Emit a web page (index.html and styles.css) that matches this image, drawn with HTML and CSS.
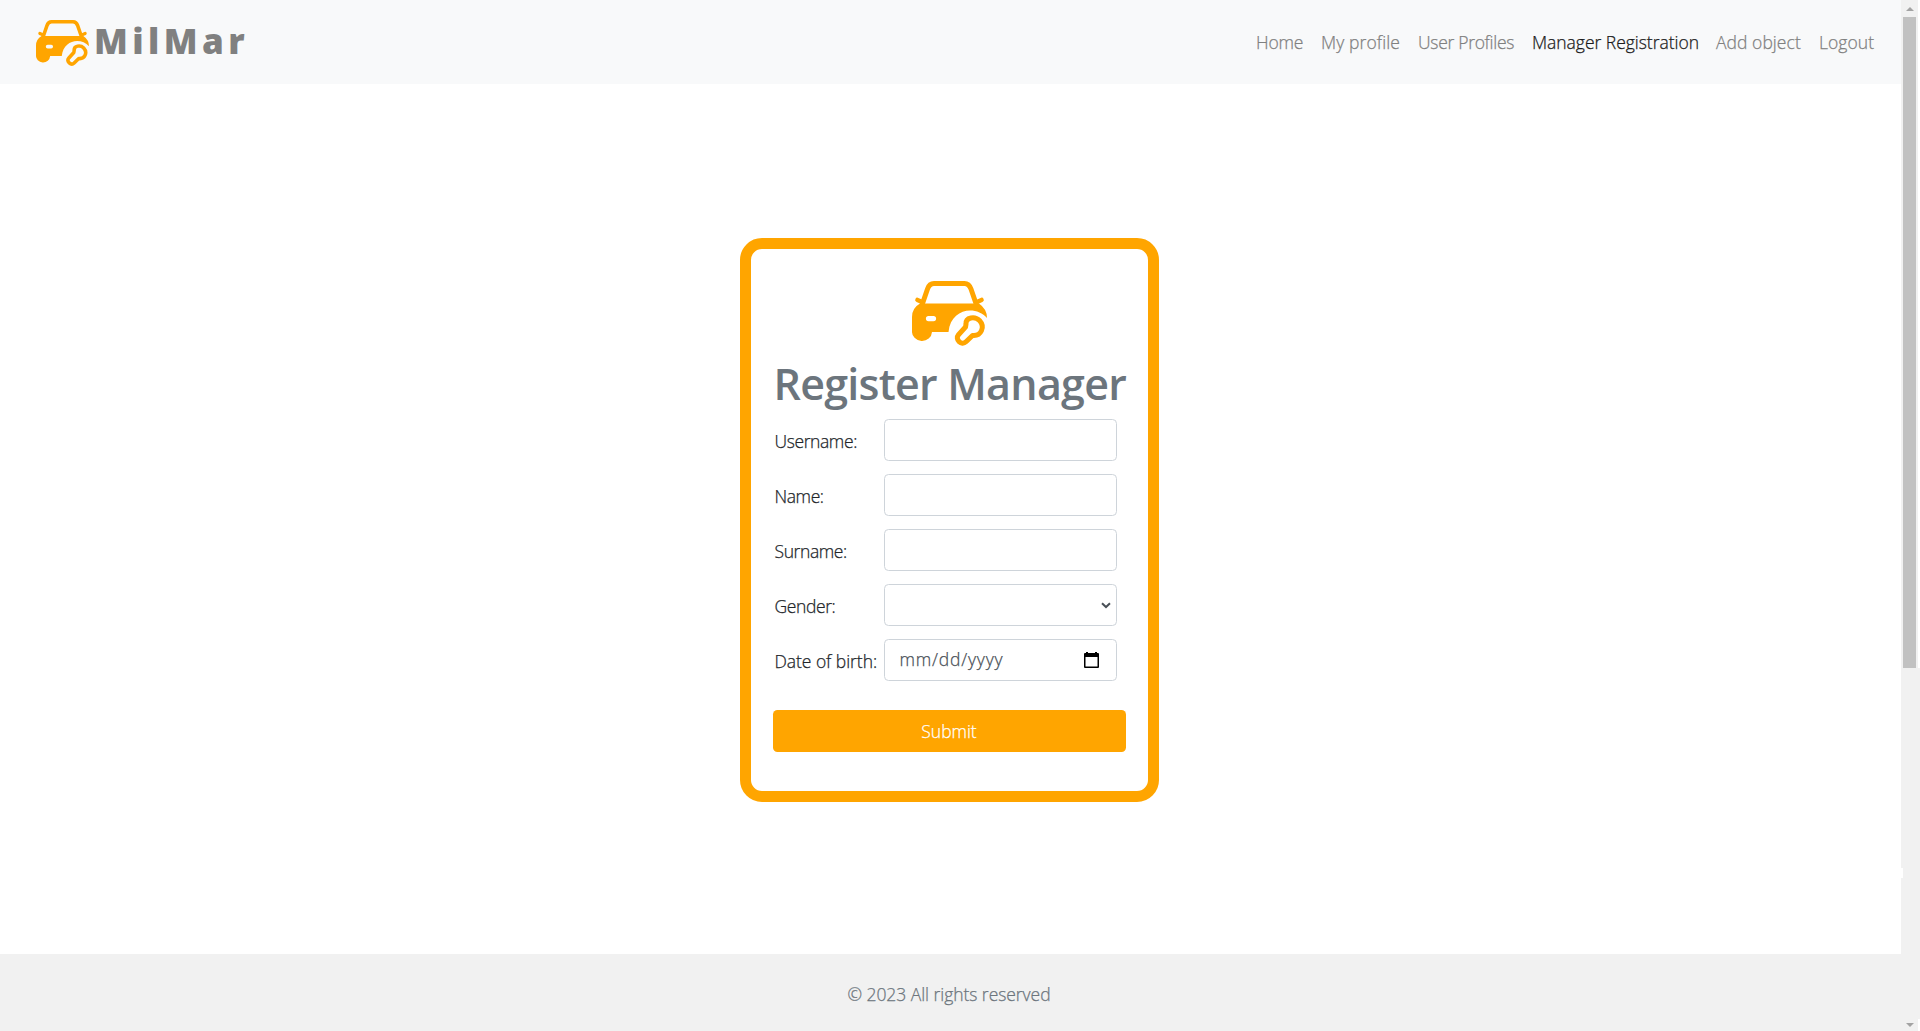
FILE: index.html
```html
<!DOCTYPE html>
<html lang="en">
<head>
<meta charset="utf-8">
<title>MilMar</title>
<link rel="stylesheet" href="styles.css">
</head>
<body>
<svg class="sprite" aria-hidden="true">
  <symbol id="car" viewBox="0 0 75 65">
    <path fill="none" stroke="currentColor" stroke-width="5" stroke-linejoin="round" d="M10 24L15.5 8Q17.3 2.5 22 2.5H52.5Q57 2.5 59 8L64.500 24"/>
    <path fill="none" stroke="currentColor" stroke-width="4.600" stroke-linecap="round" d="M5.500 19L10 21M69.500 19L65 21"/>
    <path fill="currentColor" fill-rule="evenodd" d="M8 22.500H67Q75 28 75 37C64 24.500 39 27 36.500 51H20A10 9.500 0 0 1 0 50V36Q0 27 8 22.500ZM16.500 35A2.600 2.600 0 0 0 16.500 40.200H21.500A2.600 2.600 0 0 0 21.500 35Z"/>
    <path fill="none" stroke="currentColor" stroke-width="5" stroke-linejoin="round" d="M54 43C53.500 36 63 35 67.500 39.500C73.500 46 69 55.500 60.500 54.500L54 60.800C49.500 65 42.500 58.500 46.500 53.700L53.500 46Z"/>
  </symbol>
</svg>
<div class="page">
  <header class="navbar">
    <a class="brand"><svg class="brand-icon"><use href="#car"/></svg><span class="brand-name">MilMar</span></a>
    <nav class="nav">
      <a class="n1">Home</a><a class="n2">My profile</a><a class="n3">User Profiles</a><a class="n4 active">Manager Registration</a><a class="n5">Add object</a><a class="n6">Logout</a>
    </nav>
  </header>
  <main class="main">
    <form class="card">
      <svg class="card-icon"><use href="#car"/></svg>
      <h1 class="title">Register Manager</h1>
      <div class="row"><label>Username:</label><div class="field"></div></div>
      <div class="row"><label>Name:</label><div class="field"></div></div>
      <div class="row"><label>Surname:</label><div class="field"></div></div>
      <div class="row"><label>Gender:</label><div class="field select"><svg class="chevron" viewBox="0 0 10 7"><path d="M1 1.200L5 5L9 1.200"/></svg></div></div>
      <div class="row"><label class="birth">Date of birth:</label><div class="field date"><span>mm/dd/yyyy</span><svg class="calendar" viewBox="0 0 15 16"><path fill-rule="evenodd" d="M2 0H4V1H11V0H13V1H14Q15 1 15 2V15Q15 16 14 16H1Q0 16 0 15V2Q0 1 1 1H2ZM1.500 5V14.500H13.500V5Z"/></svg></div></div>
      <button class="submit" type="button">Submit</button>
    </form>
  </main>
  <footer class="footer"><span>© 2023 All rights reserved</span></footer>
</div>
<div class="scrollbar"><i class="up"></i><i class="thumb"></i><i class="down"></i></div>
</body>
</html>
```
FILE: styles.css
```css
* { box-sizing: border-box; }
body { margin: 0; height: 1031px; display: flex; overflow: hidden; background: #fff; color: #212529; font: 300 17.5px/27px "Open Sans", "Noto Sans", sans-serif; letter-spacing: -0.4px; -webkit-text-stroke: 0.25px; }
.sprite { width: 0; height: 0; position: absolute; }
.page { flex: 1; display: flex; flex-direction: column; }
.navbar { height: 84px; background: #f8f9fa; display: flex; justify-content: space-between; padding: 0 26px 0 36px; }
.brand { display: flex; align-items: flex-start; color: orange; }
.brand-icon { width: 53px; height: 46px; margin-top: 20px; }
.brand-name { color: gray; font: 800 35px/48px "Open Sans", sans-serif; letter-spacing: 4.4px; margin: 17px 0 0 5px; -webkit-text-stroke: 0; }
.nav { display: flex; padding-top: 29px; color: #7f8080; white-space: nowrap; }
.n1 { width: 65px; letter-spacing: -0.2px; }
.n2 { width: 97px; letter-spacing: 0.1px; }
.n3 { width: 114px; letter-spacing: -0.3px; }
.n4 { width: 184px; letter-spacing: -0.03px; }
.n5 { width: 103px; letter-spacing: 0.05px; }
.n6 { width: 56px; letter-spacing: 0.05px; }
.nav .active { color: #1b1b1b; }
.main { flex: 1; display: flex; justify-content: center; align-items: flex-start; padding: 154px 3px 0 0; }
.card { width: 419px; height: 564px; border: 11px solid orange; border-radius: 22px; padding: 32px 22px 0; display: flex; flex-direction: column; color: #212529; }
.card-icon { width: 75px; height: 65px; color: orange; align-self: center; }
.title { margin: 10px 0 8px 1px; font: 600 43px/55px "Open Sans", sans-serif; letter-spacing: -0.75px; color: #6c757d; text-align: center; white-space: nowrap; -webkit-text-stroke: 0; }
.row { display: flex; height: 42px; margin-bottom: 13px; flex: none; }
.row label { width: 111px; padding: 9px 0 0 2px; white-space: nowrap; }
.row .birth { letter-spacing: -0.05px; }
.field { width: 233px; height: 42px; border: 1px solid #ced4da; border-radius: 4.500px; display: flex; justify-content: space-between; color: #495057; }
.select { justify-content: flex-end; }
.chevron { width: 10px; height: 7px; margin: 17px 5px 0 0; fill: none; stroke: #495057; stroke-width: 2; }
.date { padding: 6px 17px 0 15px; letter-spacing: 0.8px; }
.calendar { width: 15px; height: 16px; margin-top: 6px; fill: #000; }
.submit { margin-top: 16px; height: 42px; flex: none; border: 0; border-radius: 4.500px; background: orange; color: #fff; font: inherit; letter-spacing: -0.05px; padding: 0; }
.footer { height: 77px; background: #f1f1f1; color: #6c757d; padding: 27px 3px 0 0; text-align: center; letter-spacing: -0.05px; }
.scrollbar { width: 19px; display: flex; flex-direction: column; padding-left: 2px; background: linear-gradient(#fff, #fff) right top / 2px 668px no-repeat, linear-gradient(#fff, #fff) right bottom / 2px 12px no-repeat, linear-gradient(#fff, #fff) left 868px / 2px 10px no-repeat, #f1f1f1; }
.up { border: solid transparent; border-width: 0 4px 4px; border-bottom-color: #a3a3a3; width: 0; margin: 7px 0 6px 3px; }
.thumb { width: 13px; height: 651px; background: #c1c1c1; }
.down { border: solid transparent; border-width: 4px 4px 0; border-top-color: #a3a3a3; width: 0; margin: auto 0 4px 3px; }
```
